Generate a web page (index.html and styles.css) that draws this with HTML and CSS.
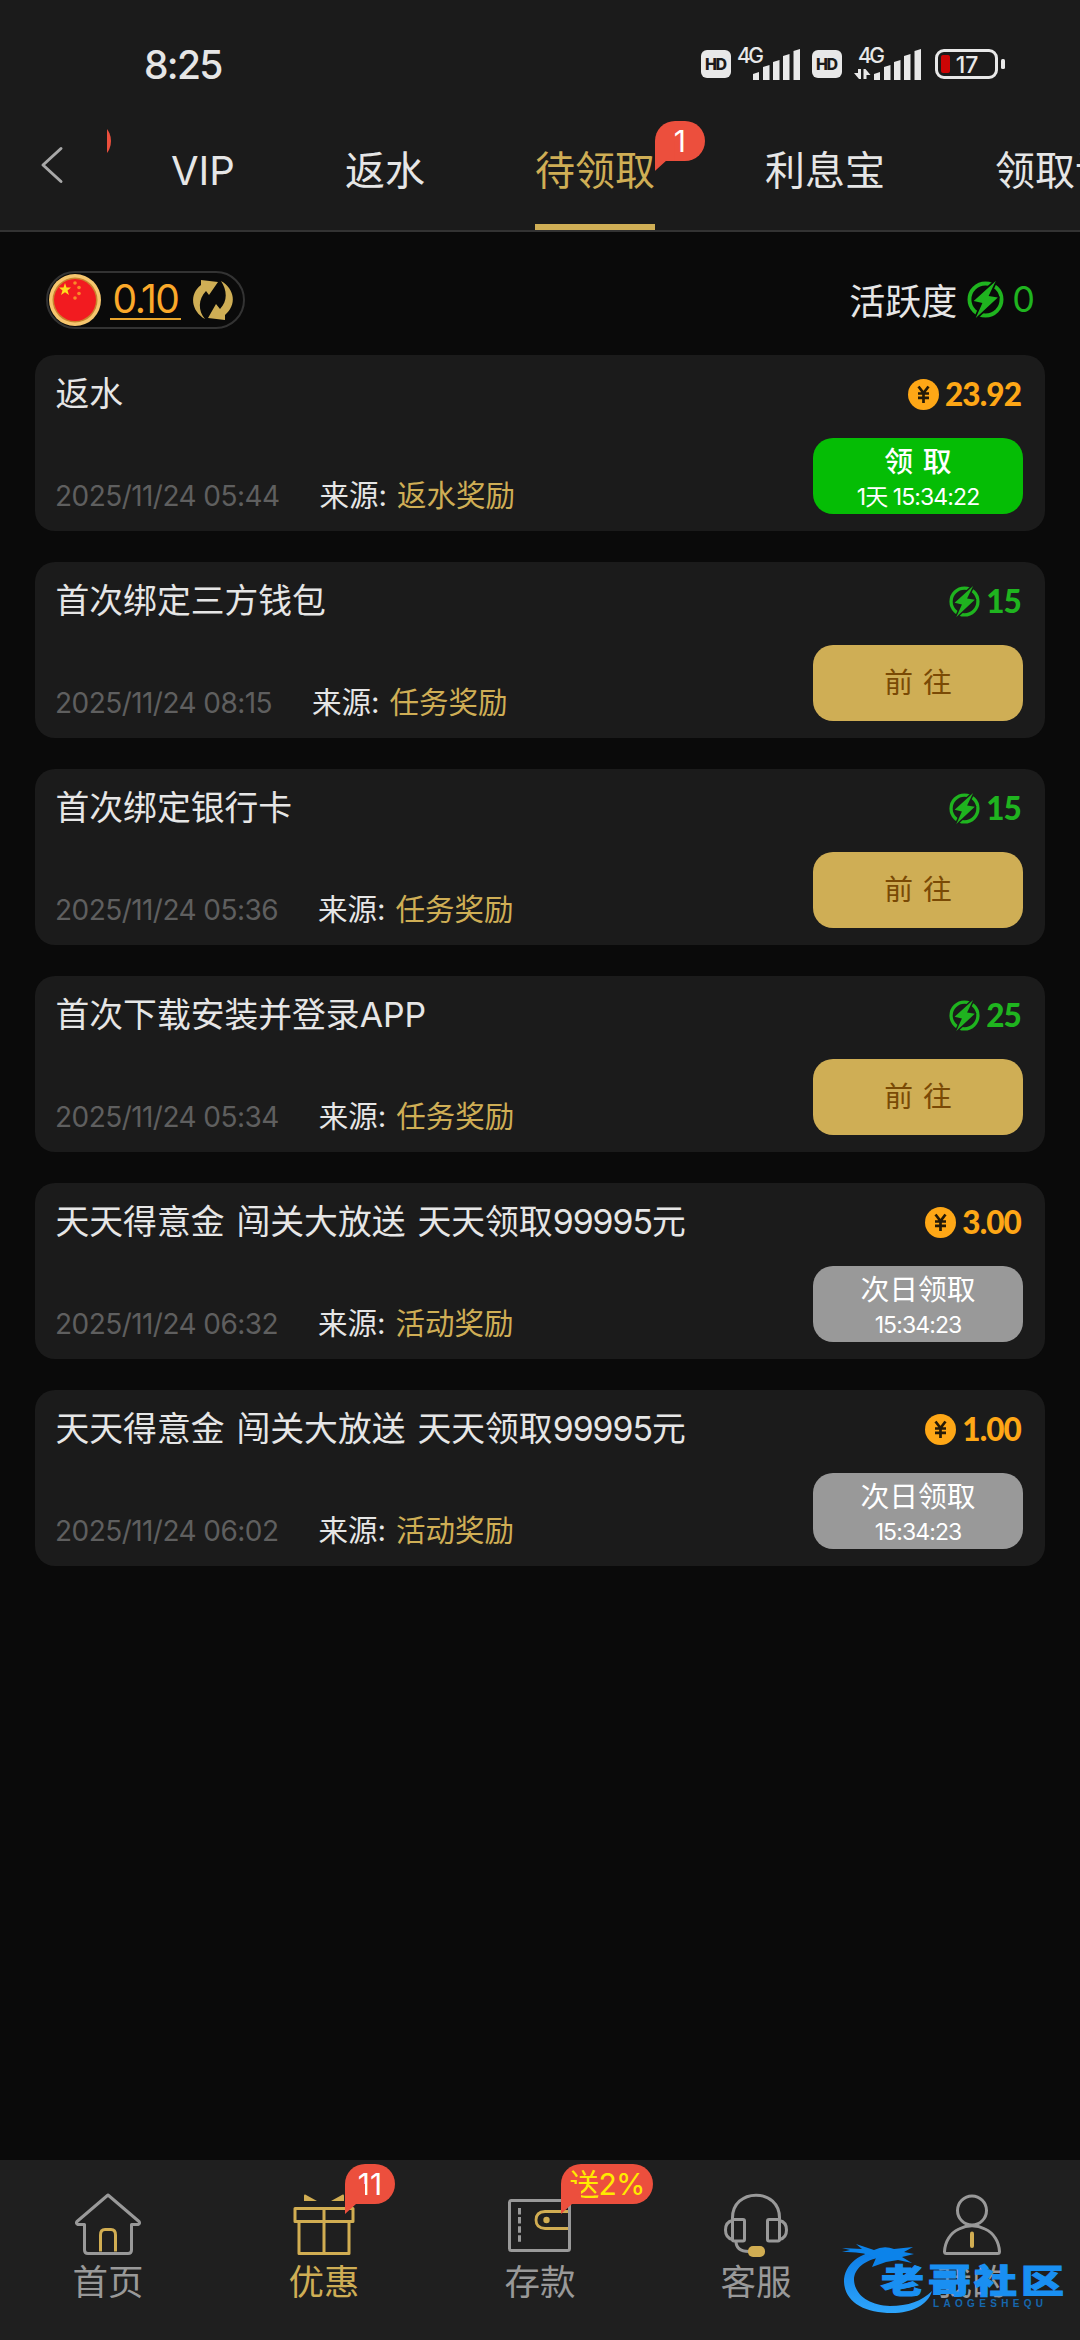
FILE: index.html
```html
<!DOCTYPE html>
<html lang="zh-CN">
<head>
<meta charset="UTF-8">
<title>待领取</title>
<link rel="stylesheet" href="styles.css">
</head>
<body>
<svg class="defs" width="0" height="0" aria-hidden="true">
  <symbol id="bolt" viewBox="0 0 36 36">
    <circle cx="18" cy="18" r="15.600" fill="none" stroke="currentColor" stroke-width="3.800"/>
    <path d="M28 0 L6.500 19.500 L15 21.500 L8.500 36 L30 16 L21 14.500 Z" fill="currentColor" stroke="var(--surface)" stroke-width="3.400" stroke-linejoin="round"/>
    <path d="M28 0 L6.500 19.500 L15 21.500 L8.500 36 L30 16 L21 14.500 Z" fill="currentColor"/>
  </symbol>
  <symbol id="coin" viewBox="0 0 31 31">
    <circle cx="15.500" cy="15.500" r="15.500" fill="#fea716"/>
    <path d="M10.500 7.500 L15.500 14 L20.500 7.500 M10 14.500 H21 M10 18.800 H21 M15.500 14 V24" fill="none" stroke="#241a08" stroke-width="2.700"/>
  </symbol>
</svg>

<header class="header">
  <div class="status">
    <span class="clock">8:25</span>
    <svg class="status-icons" width="304" height="36" viewBox="0 0 304 36">
      <g fill="#e8e8e8">
        <rect x="0" y="5" width="30" height="28" rx="6"/>
        <rect x="111" y="5" width="30" height="28" rx="6"/>
        <path d="M52 29 L58 27 V35 H52Z M62 22 L68.500 20 V35 H62Z M72 17 L78.500 15 V35 H72Z M82 11 L88.500 9 V35 H82Z M92.500 6 L99 4 V35 H92.500Z"/>
        <path d="M173 29 L179 27 V35 H173Z M183 22 L189.500 20 V35 H183Z M193 17 L199.500 15 V35 H193Z M203 11 L209.500 9 V35 H203Z M213.500 6 L220 4 V35 H213.500Z"/>
        <path d="M157 24 H160 V34 H158 L153 28 H157Z M162.500 34 V24 H164.500 L169.500 30 H165.500 V34Z"/>
        <rect x="300" y="14" width="4" height="10" rx="1.500"/>
      </g>
      <g class="hd"><text x="15" y="24.500" textLength="22">HD</text><text x="126" y="24.500" textLength="22">HD</text></g>
      <g class="net"><text x="36" y="17.500" textLength="27">4G</text><text x="157" y="17.500" textLength="27">4G</text></g>
      <rect x="235.500" y="5.500" width="60" height="27" rx="7.500" fill="none" stroke="#e8e8e8" stroke-width="3"/>
      <rect x="240" y="10" width="9" height="18" rx="2" fill="#cc0505"/>
      <text class="charge" x="266" y="28">17</text>
    </svg>
  </div>
  <nav class="tabs">
    <button class="back" aria-label="返回">
      <svg width="24" height="38" viewBox="0 0 24 38"><path d="M21 2.500 L3 19 L21 35.500" fill="none" stroke="#a8a8a8" stroke-width="3" stroke-linecap="round" stroke-linejoin="round"/></svg>
    </button>
    <div class="strip">
      <span class="tab tab-prev"><i class="badge"></i></span>
      <span class="tab">VIP</span>
      <span class="tab">返水</span>
      <span class="tab active">待领取<i class="badge">1</i></span>
      <span class="tab">利息宝</span>
      <span class="tab">领取记录</span>
    </div>
  </nav>
</header>

<main class="main">
  <section class="summary">
    <div class="wallet">
      <svg width="52" height="52" viewBox="0 0 52 52">
        <circle cx="26" cy="26" r="26" fill="#f6c66e"/>
        <circle cx="26" cy="26" r="22.500" fill="#c9842e"/>
        <circle cx="26" cy="26" r="21" fill="#f21b20"/>
        <path d="M16 9 L17.500 13.500 L22 13.500 L18.500 16.500 L20 21 L16 18.300 L12 21 L13.500 16.500 L10 13.500 L14.500 13.500Z" fill="#ffdc1e"/>
        <g fill="#f98a28"><circle cx="26" cy="9" r="1.800"/><circle cx="30" cy="13.500" r="1.800"/><circle cx="30" cy="19.500" r="1.800"/><circle cx="26" cy="24" r="1.800"/></g>
      </svg>
      <span class="balance">0.10</span>
      <svg width="42" height="44" viewBox="0 0 42 44" fill="#cfae55">
        <path d="M9 2 L26 4 L17 17 L14 13 C6 21 6 33 13 41 C-1 33 -3 16 9 7Z"/>
        <path d="M33 42 L16 40 L24 26 L28 31 C36 23 35 12 29 3 C43 11 45 27 33 37Z"/>
      </svg>
    </div>
    <div class="activity"><span>活跃度</span><svg width="37" height="37"><use href="#bolt"/></svg><b>0</b></div>
  </section>

  <article class="card">
    <div class="info"><h2>返水</h2><p><time>2025/11/24 05:44</time><span>来源:</span><em>返水奖励</em></p></div>
    <div class="side"><div class="reward gold"><svg width="31" height="31"><use href="#coin"/></svg>23.92</div>
      <button class="action claim"><span class="wide">领 取</span><small>1天 15:34:22</small></button></div>
  </article>
  <article class="card">
    <div class="info"><h2>首次绑定三方钱包</h2><p><time>2025/11/24 08:15</time><span>来源:</span><em>任务奖励</em></p></div>
    <div class="side"><div class="reward green"><svg width="31" height="31"><use href="#bolt"/></svg>15</div>
      <button class="action go"><span class="wide">前 往</span></button></div>
  </article>
  <article class="card">
    <div class="info"><h2>首次绑定银行卡</h2><p><time>2025/11/24 05:36</time><span>来源:</span><em>任务奖励</em></p></div>
    <div class="side"><div class="reward green"><svg width="31" height="31"><use href="#bolt"/></svg>15</div>
      <button class="action go"><span class="wide">前 往</span></button></div>
  </article>
  <article class="card">
    <div class="info"><h2>首次下载安装并登录APP</h2><p><time>2025/11/24 05:34</time><span>来源:</span><em>任务奖励</em></p></div>
    <div class="side"><div class="reward green"><svg width="31" height="31"><use href="#bolt"/></svg>25</div>
      <button class="action go"><span class="wide">前 往</span></button></div>
  </article>
  <article class="card">
    <div class="info"><h2>天天得意金 闯关大放送 天天领取<span class="num">99995</span>元</h2><p><time>2025/11/24 06:32</time><span>来源:</span><em>活动奖励</em></p></div>
    <div class="side"><div class="reward gold"><svg width="31" height="31"><use href="#coin"/></svg>3.00</div>
      <button class="action wait"><span>次日领取</span><small>15:34:23</small></button></div>
  </article>
  <article class="card">
    <div class="info"><h2>天天得意金 闯关大放送 天天领取<span class="num">99995</span>元</h2><p><time>2025/11/24 06:02</time><span>来源:</span><em>活动奖励</em></p></div>
    <div class="side"><div class="reward gold"><svg width="31" height="31"><use href="#coin"/></svg>1.00</div>
      <button class="action wait"><span>次日领取</span><small>15:34:23</small></button></div>
  </article>
</main>

<footer class="nav">
  <a class="item">
    <svg width="68" height="64" viewBox="0 0 68 64" fill="none" stroke="#999" stroke-width="3" stroke-linejoin="round" stroke-linecap="round">
      <path d="M10.500 31.500 H4 Q1.500 30.500 3 28.500 L34 2 L65 28.500 Q66.500 30.500 64 31.500 H57.500 V57 Q57.500 60.500 54 60.500 H14 Q10.500 60.500 10.500 57Z"/>
      <path d="M26.500 58.500 V42 Q26.500 36.500 31 36.500 H37 Q41.500 36.500 41.500 42 V58.500" stroke="#d1ad52" stroke-linecap="butt"/>
    </svg>
    <span>首页</span>
  </a>
  <a class="item on">
    <svg width="64" height="64" viewBox="0 0 64 64" fill="none" stroke="#d1ad52" stroke-width="3" stroke-linejoin="round">
      <path d="M3 15.500 H61 V28.500 H3Z M7 28.500 H57 V60.500 H7Z M32 15.500 V60.500"/>
      <path d="M12 8 V3 Q12 0.500 15 2.500 L25 8Z M52 8 V3 Q52 0.500 49 2.500 L39 8Z" fill="#d1ad52" stroke="none"/>
    </svg>
    <span>优惠</span><i class="badge">11</i>
  </a>
  <a class="item">
    <svg width="64" height="64" viewBox="0 0 64 64" fill="none" stroke="#999" stroke-width="3" stroke-linejoin="round">
      <rect x="1.500" y="7.500" width="60" height="50" rx="2"/>
      <path d="M11.500 15 V49" stroke-dasharray="6.500 2.600"/>
      <path d="M60 18.500 H37 Q28 19 28 27 Q28 35 37 35.500 H60" stroke="#d1ad52" stroke-width="2.800"/>
      <circle cx="38.500" cy="27" r="3.200" fill="#d1ad52" stroke="none"/>
    </svg>
    <span>存款</span><i class="badge promo">送2%</i>
  </a>
  <a class="item">
    <svg width="66" height="64" viewBox="0 0 66 64" fill="none" stroke="#999" stroke-width="3" stroke-linejoin="round">
      <path d="M9.500 26.500 C8 -6 58 -6 56.500 26.500"/>
      <rect x="9.500" y="26.500" width="12" height="21.500" rx="1.500"/><rect x="44.500" y="26.500" width="12" height="21.500" rx="1.500"/>
      <path d="M9.500 27.500 Q2.500 29 2.500 37 Q2.500 45 9.500 46.500 M56.500 27.500 Q63.500 29 63.500 37 Q63.500 45 56.500 46.500 M13 48 Q13 58.500 26 58.500"/>
      <rect x="25" y="53" width="17" height="11" rx="5" fill="#d1ad52" stroke="none"/>
    </svg>
    <span>客服</span>
  </a>
  <a class="item">
    <svg width="60" height="64" viewBox="0 0 60 64" fill="none" stroke="#999" stroke-width="3" stroke-linejoin="round">
      <circle cx="30" cy="17.500" r="14.500"/>
      <path d="M17 36 Q30 29.500 43 36 C52 40 57 49 57.500 58.500 Q57.500 60.500 55.500 60.500 H4.500 Q2.500 60.500 2.500 58.500 C3 49 8 40 17 36Z"/>
      <path d="M30 40.500 V53" stroke="#d1ad52" stroke-width="4" stroke-linecap="round"/>
    </svg>
    <span>我的</span>
  </a>
  <svg class="watermark" width="224" height="76" viewBox="0 0 224 76">
    <defs><linearGradient id="sea" x1="0" y1="0" x2="0" y2="1"><stop offset="0" stop-color="#0a7be6"/><stop offset="1" stop-color="#2ea5fb"/></linearGradient></defs>
    <path d="M41 8 C18 10 2 22 2 40 C3 60 22 71 50 71 C70 71 86 63 90 49 C80 59 66 64 48 64 C28 63 13 54 12 38 C12 27 22 18 40 15Z" fill="url(#sea)"/>
    <path d="M0 6 L20 7 L14 2 L32 8 Q42 3 52 7 L71 5 L62 10 L72 12 L60 15 L70 21 L56 18 L44 20 L30 25 L34 16 Q22 9 0 10 L8 8Z" fill="#0c83ea"/>
    <g class="brand"><text transform="translate(39 51) scale(1.3 1)">老</text><text transform="translate(86 51) scale(1.3 1)">哥</text><text transform="translate(132 51) scale(1.3 1)">社</text><text transform="translate(179 51) scale(1.3 1)">区</text></g>
    <text class="latin" x="91" y="65" textLength="110">LAOGESHEQU</text>
  </svg>
</footer>
</body>
</html>
```

FILE: styles.css
```css
* { box-sizing: border-box; }

body {
  --surface: #0a0a0a;
  margin: 0;
  width: 1080px;
  height: 2340px;
  display: flex;
  flex-direction: column;
  background: #0a0a0a;
  color: #e6e6e6;
  font-family: Inter, "Noto Sans CJK SC", sans-serif;
  overflow: hidden;
}

svg { display: block; flex: none; overflow: visible; }
.defs { position: absolute; }
button { border: 0; padding: 0; background: none; color: inherit; font: inherit; }
i, em { font-style: normal; }

/* header */
.header {
  height: 232px;
  background: #1b1b1b;
  border-bottom: 2px solid #333;
}
.status {
  height: 115px;
  padding: 45px 75px 0 144px;
  display: flex;
  justify-content: space-between;
}
.clock { font-size: 39px; line-height: 40px; font-weight: 500; letter-spacing: -1.700px; }
.hd { font: 800 16px Inter, sans-serif; fill: #1b1b1b; text-anchor: middle; }
.net { font: 500 21px Inter, sans-serif; fill: #e8e8e8; }
.charge { font: 500 23px Inter, sans-serif; fill: #e8e8e8; text-anchor: middle; }

.tabs { display: flex; height: 115px; }
.back { width: 107px; padding: 31px 0 0 40px; display: flex; }
.strip {
  flex: 1;
  display: flex;
  gap: 110px;
  overflow: hidden;
}
.tab {
  position: relative;
  flex: none;
  padding-top: 26px;
  height: 115px;
  font-size: 40px;
  line-height: 60px;
  white-space: nowrap;
}
.tab-prev { width: 0; margin-right: -46px; }
.tab-prev .badge { left: -46px; }
.active { color: #cfae55; border-bottom: 6px solid #cfae55; }

.badge {
  position: absolute;
  left: 100%;
  top: 6px;
  min-width: 50px;
  height: 40px;
  border-radius: 20px;
  background: #ec4f3d;
  color: #fff;
  font-size: 30px;
  line-height: 40px;
  text-align: center;
}
.badge::after {
  content: "";
  position: absolute;
  left: 0;
  top: 20px;
  width: 20px;
  height: 30px;
  background: inherit;
  clip-path: polygon(0 0, 100% 0, 100% 20px, 11px 20px, 0 100%);
}

/* list */
.main {
  flex: 1;
  padding: 39px 35px 0;
  display: flex;
  flex-direction: column;
}
.summary {
  display: flex;
  justify-content: space-between;
  padding: 0 11px;
  height: 84px;
}
.wallet {
  display: flex;
  align-items: center;
  width: 199px;
  height: 58px;
  padding-left: 1px;
  border: 2px solid #333;
  border-radius: 29px;
}
.balance {
  margin: 0 11px 0 9px;
  width: 71px;
  height: 40px;
  border-bottom: 2px solid #e9a52c;
  color: #fba92a;
  font-size: 39px;
  line-height: 38px;
  letter-spacing: -1.500px;
  display: flex;
  justify-content: center;
}
.activity {
  display: flex;
  align-items: center;
  height: 56px;
  font-size: 36px;
}
.activity svg { margin: 0 8px 0 10px; color: #1fb41f; }
.activity b { font-weight: 400; color: #1fb41f; letter-spacing: -1px; }

.card {
  --surface: #1b1b1b;
  height: 176px;
  margin-bottom: 31px;
  padding: 0 22px 0 21px;
  display: flex;
  justify-content: space-between;
  background: #1b1b1b;
  border-radius: 20px;
}
.info { display: flex; flex-direction: column; justify-content: space-between; padding: 15px 0 13px; }
.info h2 {
  margin: 0 0 0 -0.500px;
  font-size: 33.800px;
  line-height: 48px;
  font-weight: 400;
  word-spacing: 2.500px;
  white-space: nowrap;
}
.num { letter-spacing: -1px; }
.info p { margin: 0 0 0 -1px; display: flex; font-size: 29.500px; line-height: 42px; white-space: nowrap; }
.info time { margin-right: 40px; font-size: 28px; line-height: 44px; color: #5f5f5f; letter-spacing: -0.550px; }
.info em { margin-left: 10px; color: #cfae55; }

.side { width: 210px; display: flex; flex-direction: column; }
.reward {
  height: 83px;
  padding: 24px 2px 0 0;
  display: flex;
  gap: 6px;
  justify-content: flex-end;
  font-family: Lato, sans-serif;
  font-size: 31.500px;
  line-height: 31px;
  font-weight: 900;
  letter-spacing: -0.900px;
}
.gold { color: #fea716; }
.green { color: #1fb41f; }
.action {
  height: 76px;
  border-radius: 20px;
  display: flex;
  flex-direction: column;
  align-items: center;
  justify-content: center;
  font-size: 28.800px;
  line-height: 38px;
  color: #fff;
}
.wide { word-spacing: 2px; }
.action small { font-size: 23px; line-height: 32px; letter-spacing: -0.900px; }
.claim { background: #05bd05; padding-top: 4px; }
.claim .wide { font-weight: 500; }
.go { background: #cfae55; color: #7a4a05; }
.wait { background: #999; padding-top: 4px; }

/* bottom navigation */
.nav {
  position: relative;
  height: 180px;
  display: grid;
  grid-template-columns: repeat(5, 1fr);
  background: #1f1f1f;
}
.item {
  position: relative;
  display: flex;
  flex-direction: column;
  align-items: center;
  padding-top: 33px;
  color: #999;
  font-size: 35.500px;
  line-height: 51px;
}
.on { color: #cfae55; }
.nav .badge { left: 129px; top: 4px; }
.nav .promo { width: 92px; color: #ffeb00; letter-spacing: -0.800px; }
.watermark { position: absolute; left: 842px; top: 82px; }
.brand { font: 900 33px "Noto Sans CJK SC", sans-serif; fill: #198ff2; stroke: #198ff2; stroke-width: 1px; }
.latin { font: 700 10px "Liberation Sans", sans-serif; fill: #1667ad; }
```
